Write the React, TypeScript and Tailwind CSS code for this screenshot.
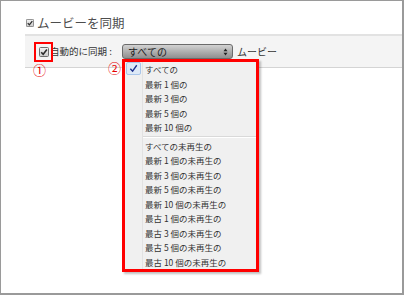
import React from 'react';

const FONT = "font-['Noto_Sans_CJK_JP','Noto_Sans',sans-serif]";

const groupA = ['すべての', '最新 1 個の', '最新 3 個の', '最新 5 個の', '最新 10 個の'];
const groupB = [
  'すべての未再生の',
  '最新 1 個の未再生の',
  '最新 3 個の未再生の',
  '最新 5 個の未再生の',
  '最新 10 個の未再生の',
  '最古 1 個の未再生の',
  '最古 3 個の未再生の',
  '最古 5 個の未再生の',
  '最古 10 個の未再生の',
];

function CheckBox({ size }: { size: number }) {
  return (
    <svg width={size} height={size} viewBox="0 0 10 10" className="shrink-0">
      <defs>
        <linearGradient id={`cb${size}`} x1="0" y1="0" x2="0" y2="1">
          <stop offset="0" stopColor="#f4f4f4" />
          <stop offset="1" stopColor="#c9c9c9" />
        </linearGradient>
      </defs>
      <rect x="0.5" y="0.5" width="9" height="9" rx="1" fill={`url(#cb${size})`} stroke="#6d6d6d" />
      <path d="M2.2 5.2 L4.2 7.3 L7.9 2.6" fill="none" stroke="#2c2c2c" strokeWidth="1.6" />
    </svg>
  );
}

function MenuItem({ label, checked }: { label: string; checked?: boolean }) {
  return (
    <div className="relative flex h-[14.5px] items-center pl-[20px] text-[8.5px] leading-none text-[#333]">
      {checked && (
        <div className="absolute left-[1px] top-[0px] flex h-[13px] w-[15px] items-center justify-center rounded-[2px] border border-[#a9c6ea] bg-[#dde9f7]">
          <svg width="9" height="9" viewBox="0 0 10 10">
            <path d="M1.5 5.2 L4 8 L8.6 1.4" fill="none" stroke="#1b2f8c" strokeWidth="1.5" />
          </svg>
        </div>
      )}
      {label}
    </div>
  );
}

export default function App() {
  return (
    <div className={`relative h-[295px] w-[404px] overflow-hidden border-l border-t border-r-2 border-b-2 border-[#9a9a9a] bg-white ${FONT}`}>
      {/* section title */}
      <div className="flex h-[33px] items-center gap-[3px] pl-[25px] pt-[11px]">
        <CheckBox size={8} />
        <span className="text-[12.5px] leading-none text-[#4d4d4d]">ムービーを同期</span>
      </div>

      {/* sync row */}
      <div className="ml-[24px] flex h-[34px] items-center border-t-2 border-b border-t-[#e2e2e2] border-b-[#d4d4d4] bg-[#f4f4f4] pl-[14px]">
        <CheckBox size={10} />
        <span className="ml-[1px] w-[72px] text-[9.5px] leading-none text-[#333]">自動的に同期&nbsp;:</span>
        <div className="flex h-[15px] w-[111px] items-center justify-between rounded-[3px] border border-[#6b6b6b] bg-gradient-to-b from-[#d2d2d2] to-[#8f8f8f] pl-[5px] pr-[4px]">
          <span className="text-[10px] leading-none text-[#1e1e1e]">すべての</span>
          <svg width="5" height="8" viewBox="0 0 5 8">
            <path d="M0.5 3.2 L2.5 0.6 L4.5 3.2 Z M0.5 4.8 L2.5 7.4 L4.5 4.8 Z" fill="#222" />
          </svg>
        </div>
        <span className="ml-[4px] text-[10px] leading-none text-[#333]">ムービー</span>
      </div>

      {/* popup menu */}
      <div className="absolute left-[121px] top-[58px] w-[137px] border-[3px] border-[#ff0000] bg-[#f0f0f0] shadow-[2px_2px_2px_rgba(0,0,0,0.25)]">
        <div className="absolute bottom-0 left-[17px] top-0 w-px bg-[#e2e2e2]" />
        {groupA.map((t, i) => (
          <MenuItem key={t} label={t} checked={i === 0} />
        ))}
        <div className="flex h-[4px] items-center pl-[18px]">
          <div className="h-[2px] w-full border-t border-b border-t-[#d9d9d9] border-b-white" />
        </div>
        {groupB.map((t) => (
          <MenuItem key={t} label={t} />
        ))}
      </div>

      {/* annotations */}
      <div className="absolute left-[33px] top-[41px] h-[20px] w-[19px] border-2 border-[#ff0000]" />
      <div className="absolute left-[32px] top-[62px] text-[13px] leading-none text-[#e60000]">①</div>
      <div className="absolute left-[107px] top-[60px] text-[13px] leading-none text-[#e60000]">②</div>
    </div>
  );
}
